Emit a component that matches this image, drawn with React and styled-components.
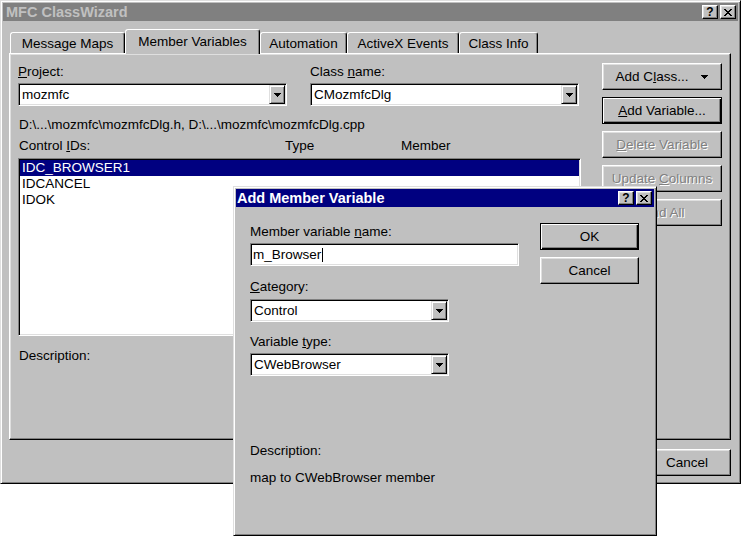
import React from 'react';
import styled, { createGlobalStyle, css } from 'styled-components';

const GlobalStyle = createGlobalStyle`
  html, body { margin: 0; padding: 0; background: #ffffff; }
  body {
    font-family: "Liberation Sans", Arial, sans-serif;
    font-size: 13.5px;
    color: #000;
    -webkit-font-smoothing: none;
  }
  * { box-sizing: border-box; }
`;

const raisedFrame = css`
  border: 1px solid;
  border-color: #dfdfdf #000 #000 #dfdfdf;
  box-shadow: inset 1px 1px 0 #fff, inset -1px -1px 0 #808080;
`;

const sunken = css`
  border: 1px solid;
  border-color: #808080 #fff #fff #808080;
  box-shadow: inset 1px 1px 0 #000, inset -1px -1px 0 #dfdfdf;
`;

const Desktop = styled.div`
  position: relative;
  width: 741px;
  height: 536px;
  overflow: hidden;
  background: #fff;
`;

const Window = styled.div`
  width: 741px;
  height: 484px;
  background: #c0c0c0;
  ${raisedFrame};
  padding: 2px;
  display: flex;
  flex-direction: column;
`;

const DialogWindow = styled.div`
  position: absolute;
  left: 233px;
  top: 186px;
  width: 424px;
  height: 350px;
  background: #c0c0c0;
  ${raisedFrame};
  padding: 2px;
  display: flex;
  flex-direction: column;
  z-index: 10;
`;

const TitleBar = styled.div`
  height: 18px;
  flex: none;
  display: flex;
  align-items: center;
  justify-content: space-between;
  padding: 0 2px 0 ${p => p.$pl}px;
  background: ${p => (p.$active ? '#000080' : '#808080')};
  color: ${p => (p.$active ? '#fff' : '#c0c0c0')};
  font-weight: bold;
  font-size: 14.5px;
  white-space: nowrap;
`;

const CaptionButtons = styled.div`
  display: flex;
  gap: 2px;
`;

const CaptionButton = styled.div`
  width: 16px;
  height: 14px;
  background: #c0c0c0;
  border: 1px solid;
  border-color: #fff #000 #000 #fff;
  box-shadow: inset -1px -1px 0 #808080, inset 1px 1px 0 #dfdfdf;
  display: flex;
  align-items: center;
  justify-content: center;
  color: #000;
  font-size: 12px;
  font-weight: bold;
  line-height: 1;
`;

const Body = styled.div`
  flex: 1;
  display: flex;
  flex-direction: column;
  padding: 8px 7px 0 6px;
`;

const TabRow = styled.div`
  display: flex;
  align-items: flex-end;
  height: 24px;
  padding-left: 1px;
`;

const Tab = styled.div`
  position: relative;
  flex: none;
  width: ${p => p.$w}px;
  height: ${p => (p.$selected ? 25 : 21)}px;
  margin-bottom: ${p => (p.$selected ? -1 : 0)}px;
  z-index: ${p => (p.$selected ? 3 : 2)};
  background: #c0c0c0;
  border: 1px solid;
  border-bottom: none;
  border-color: #fff #000 transparent #fff;
  box-shadow: inset -1px 0 0 #808080;
  border-radius: 3px 3px 0 0;
  display: flex;
  align-items: center;
  justify-content: center;
  padding-bottom: ${p => (p.$selected ? 2 : 0)}px;
  white-space: nowrap;
`;

const Panel = styled.div`
  position: relative;
  z-index: 1;
  flex: none;
  height: 387px;
  background: #c0c0c0;
  border: 1px solid;
  border-color: #fff #000 #000 #fff;
  box-shadow: inset -1px -1px 0 #808080, inset 1px 1px 0 #dfdfdf;
  padding: 9px 7px 0 8px;
  display: grid;
  grid-template-columns: 563px 120px;
  column-gap: 21px;
  align-items: start;
`;

const Column = styled.div`
  display: flex;
  flex-direction: column;
`;

const FieldRow = styled.div`
  display: flex;
  gap: 23px;
  margin-top: 1px;
`;

const FieldGroup = styled.div`
  display: flex;
  flex-direction: column;
  margin-top: ${p => p.$mt || 0}px;
`;

const Label = styled.div`
  height: 16px;
  line-height: 16px;
  margin-bottom: ${p => (p.$mb != null ? p.$mb : 3)}px;
  white-space: nowrap;
`;

const TextLine = styled.div`
  height: 16px;
  line-height: 16px;
  margin-top: ${p => p.$mt || 0}px;
  padding-left: ${p => p.$pl || 0}px;
  white-space: nowrap;
`;

const U = styled.span`
  text-decoration: underline;
  text-underline-offset: 1px;
`;

const Combo = styled.div`
  width: ${p => p.$w}px;
  height: 23px;
  background: #fff;
  ${sunken};
  padding: 1px;
  display: flex;
  align-items: stretch;
`;

const ComboText = styled.div`
  flex: 1;
  padding-left: 2px;
  display: flex;
  align-items: center;
  white-space: nowrap;
  overflow: hidden;
`;

const DropButton = styled.div`
  width: 16px;
  flex: none;
  background: #c0c0c0;
  border: 1px solid;
  border-color: #dfdfdf #000 #000 #dfdfdf;
  box-shadow: inset 1px 1px 0 #fff, inset -1px -1px 0 #808080;
  display: flex;
  align-items: center;
  justify-content: center;
`;

const Edit = styled.div`
  width: ${p => p.$w}px;
  height: 23px;
  background: #fff;
  ${sunken};
  padding: 0 2px;
  display: flex;
  align-items: center;
  white-space: nowrap;
`;

const Caret = styled.span`
  display: inline-block;
  width: 1px;
  height: 14px;
  background: #000;
  margin-left: 1px;
`;

const Headers = styled.div`
  display: grid;
  grid-template-columns: 266px 116px 1fr;
  padding-left: 1px;
  height: 16px;
  line-height: 16px;
  margin-top: 5px;
  white-space: nowrap;
`;

const List = styled.div`
  height: 178px;
  margin-top: 4px;
  background: #fff;
  ${sunken};
  padding: 1px;
`;

const ListRow = styled.div`
  height: 16px;
  line-height: 16px;
  padding-left: 2px;
  background: ${p => (p.$selected ? '#000080' : 'transparent')};
  color: ${p => (p.$selected ? '#fff' : '#000')};
  white-space: nowrap;
`;

const ButtonStack = styled.div`
  display: flex;
  flex-direction: column;
  gap: 7px;
`;

const Button = styled.button`
  font: inherit;
  color: ${p => (p.$disabled ? '#808080' : '#000')};
  text-shadow: ${p => (p.$disabled ? '1px 1px 0 #fff' : 'none')};
  width: ${p => (p.$w ? `${p.$w}px` : '100%')};
  height: 27px;
  padding: 0;
  margin: 0;
  background: #c0c0c0;
  border: 1px solid;
  border-color: #fff #000 #000 #fff;
  box-shadow: inset -1px -1px 0 #808080, inset 1px 1px 0 #dfdfdf;
  display: flex;
  align-items: center;
  justify-content: center;
  gap: 13px;
  white-space: nowrap;
  cursor: default;
  outline: none;
  ${p =>
    p.$default &&
    css`
      border-color: #000;
      box-shadow: inset 1px 1px 0 #fff, inset -1px -1px 0 #000, inset -2px -2px 0 #808080;
    `}
`;

const BottomRow = styled.div`
  display: flex;
  justify-content: flex-end;
  gap: 10px;
  padding-top: 9px;
`;

const DialogBody = styled.div`
  display: grid;
  grid-template-columns: 269px 99px;
  column-gap: 21px;
  align-items: start;
  padding: 16px 0 0 14px;
`;

const Arrow = () => (
  <svg width="7" height="4" viewBox="0 0 7 4" shapeRendering="crispEdges">
    <path d="M0 0h7v1h-1v1h-1v1h-1v1h-1v-1h-1v-1h-1v-1h-1z" fill="#000" />
  </svg>
);

const CloseGlyph = () => (
  <svg width="8" height="7" viewBox="0 0 8 7" shapeRendering="crispEdges">
    <path
      d="M0 0h2v1h1v1h2v-1h1v-1h2v1h-1v1h-1v1h-1v1h1v1h1v1h1v1h-2v-1h-1v-1h-2v1h-1v1h-2v-1h1v-1h1v-1h1v-1h-1v-1h-1v-1h-1z"
      fill="#000"
    />
  </svg>
);

const Caption = () => (
  <CaptionButtons>
    <CaptionButton>?</CaptionButton>
    <CaptionButton>
      <CloseGlyph />
    </CaptionButton>
  </CaptionButtons>
);

const ComboBox = ({ w, value }) => (
  <Combo $w={w}>
    <ComboText>{value}</ComboText>
    <DropButton>
      <Arrow />
    </DropButton>
  </Combo>
);

const tabs = [
  { label: 'Message Maps', w: 115 },
  { label: 'Member Variables', w: 135, selected: true },
  { label: 'Automation', w: 87 },
  { label: 'ActiveX Events', w: 112 },
  { label: 'Class Info', w: 79 },
];

const rows = [
  { id: 'IDC_BROWSER1', selected: true },
  { id: 'IDCANCEL' },
  { id: 'IDOK' },
];

export default function App() {
  return (
    <>
      <GlobalStyle />
      <Desktop>
        <Window>
          <TitleBar $pl={3}>
            <span>MFC ClassWizard</span>
            <Caption />
          </TitleBar>
          <Body>
            <TabRow>
              {tabs.map(t => (
                <Tab key={t.label} $w={t.w} $selected={t.selected}>
                  {t.label}
                </Tab>
              ))}
            </TabRow>
            <Panel>
              <Column>
                <FieldRow>
                  <FieldGroup>
                    <Label>
                      <U>P</U>roject:
                    </Label>
                    <ComboBox w={269} value="mozmfc" />
                  </FieldGroup>
                  <FieldGroup>
                    <Label>
                      Class <U>n</U>ame:
                    </Label>
                    <ComboBox w={269} value="CMozmfcDlg" />
                  </FieldGroup>
                </FieldRow>
                <TextLine $mt={11} $pl={1}>
                  D:\...\mozmfc\mozmfcDlg.h, D:\...\mozmfc\mozmfcDlg.cpp
                </TextLine>
                <Headers>
                  <span>
                    Control <U>I</U>Ds:
                  </span>
                  <span>Type</span>
                  <span>Member</span>
                </Headers>
                <List>
                  {rows.map(r => (
                    <ListRow key={r.id} $selected={r.selected}>
                      {r.id}
                    </ListRow>
                  ))}
                </List>
                <TextLine $mt={12} $pl={1}>
                  Description:
                </TextLine>
              </Column>
              <ButtonStack>
                <Button>
                  <span>
                    Add C<U>l</U>ass...
                  </span>
                  <Arrow />
                </Button>
                <Button $default>
                  <span>
                    <U>A</U>dd Variable...
                  </span>
                </Button>
                <Button $disabled>
                  <span>
                    <U>D</U>elete Variable
                  </span>
                </Button>
                <Button $disabled>
                  <span>
                    Update <U>C</U>olumns
                  </span>
                </Button>
                <Button $disabled>
                  <span>Bind All</span>
                </Button>
              </ButtonStack>
            </Panel>
            <BottomRow>
              <Button $w={88} $default>
                OK
              </Button>
              <Button $w={88}>Cancel</Button>
            </BottomRow>
          </Body>
        </Window>

        <DialogWindow>
          <TitleBar $active $pl={1}>
            <span>Add Member Variable</span>
            <Caption />
          </TitleBar>
          <DialogBody>
            <Column>
              <FieldGroup $mt={1}>
                <Label>
                  Member variable <U>n</U>ame:
                </Label>
                <Edit $w={269}>
                  m_Browser
                  <Caret />
                </Edit>
              </FieldGroup>
              <FieldGroup $mt={13}>
                <Label $mb={4}>
                  <U>C</U>ategory:
                </Label>
                <ComboBox w={199} value="Control" />
              </FieldGroup>
              <FieldGroup $mt={12}>
                <Label>
                  Variable <U>t</U>ype:
                </Label>
                <ComboBox w={199} value="CWebBrowser" />
              </FieldGroup>
              <TextLine $mt={67}>Description:</TextLine>
              <TextLine $mt={11}>map to CWebBrowser member</TextLine>
            </Column>
            <ButtonStack>
              <Button $default>OK</Button>
              <Button>Cancel</Button>
            </ButtonStack>
          </DialogBody>
        </DialogWindow>
      </Desktop>
    </>
  );
}
